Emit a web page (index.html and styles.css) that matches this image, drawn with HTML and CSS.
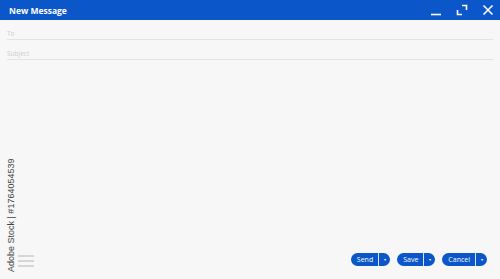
FILE: index.html
```html
<!DOCTYPE html>
<html lang="en">
<head>
    <meta charset="UTF-8">
    <title>New Message</title>
    <link rel="stylesheet" href="styles.css">
</head>
<body>

<div class="window">
    <!-- Title bar -->
    <div class="titlebar">
        <span class="title">New Message</span>
        <div class="controls">
            <svg width="12" height="12" viewBox="0 0 12 12"><path d="M1 10.5h10" stroke="#fff" stroke-width="1.6"/></svg>
            <svg width="12" height="12" viewBox="0 0 12 12"><path d="M6 1.5h4.5V6M1.5 6v4.5H6" fill="none" stroke="#fff" stroke-width="1.6"/></svg>
            <svg width="12" height="12" viewBox="0 0 12 12"><path d="M1.5 1.5l9 9M10.5 1.5l-9 9" stroke="#fff" stroke-width="1.6"/></svg>
        </div>
    </div>

    <!-- Fields -->
    <div class="fields">
        <div class="field">To</div>
        <div class="field">Subject</div>
    </div>

    <div class="body"></div>

    <!-- Footer -->
    <div class="footer">
        <div class="menu">
            <span></span><span></span><span></span>
        </div>
        <div class="actions">
            <div class="split"><span class="main">Send</span><span class="drop">&#9662;</span></div>
            <div class="split"><span class="main">Save</span><span class="drop">&#9662;</span></div>
            <div class="split"><span class="main">Cancel</span><span class="drop">&#9662;</span></div>
        </div>
    </div>

    <div class="stamp">Adobe Stock | #1764054539</div>
</div>

</body>
</html>
```

FILE: styles.css
```css
body {
    margin: 0;
    font-family: "Open Sans", Arial, sans-serif;
    background-color: #f7f7f7;
}
.window {
    position: relative;
    width: 500px;
    height: 279px;
    display: flex;
    flex-direction: column;
    background-color: #f7f7f7;
}

/* Title bar */
.titlebar {
    height: 20px;
    background-color: #0b56c9;
    display: flex;
    align-items: center;
    justify-content: space-between;
    padding: 0 6px 0 9px;
}
.title {
    color: #fff;
    font-size: 8.5px;
    font-weight: 700;
}
.controls {
    display: flex;
    gap: 14px;
    align-items: center;
}
.controls svg {
    display: block;
}

/* Fields */
.fields {
    padding: 0 7px;
}
.field {
    box-sizing: border-box;
    height: 20px;
    display: flex;
    align-items: flex-end;
    padding-bottom: 1px;
    font-size: 6.5px;
    color: #cdcdcd;
    border-bottom: 1px solid #e3e3e3;
}
.body {
    flex: 1;
}

/* Footer */
.footer {
    height: 28px;
    display: flex;
    justify-content: space-between;
    align-items: flex-start;
    padding: 2px 13px 0 18px;
    box-sizing: border-box;
}
.menu {
    display: flex;
    flex-direction: column;
    gap: 3px;
    padding-top: 2px;
}
.menu span {
    display: block;
    width: 16px;
    height: 2px;
    background-color: #d6d6d6;
}
.actions {
    display: flex;
    gap: 7px;
}
.split {
    display: flex;
    height: 13px;
    border-radius: 7px;
    overflow: hidden;
    background-color: #0b56c9;
    color: #fff;
    font-size: 7px;
}
.split .main {
    display: flex;
    align-items: center;
    padding: 0 5px 0 6px;
    border-right: 1px solid #d6e2f5;
}
.split .drop {
    display: flex;
    align-items: center;
    justify-content: center;
    width: 11px;
    font-size: 4px;
}

/* Vertical credit line */
.stamp {
    position: absolute;
    left: 6px;
    top: 272px;
    transform: rotate(-90deg);
    transform-origin: 0 0;
    font-family: "Liberation Sans", Arial, sans-serif;
    font-size: 9px;
    color: #444;
    white-space: nowrap;
    line-height: 10px;
}
```
